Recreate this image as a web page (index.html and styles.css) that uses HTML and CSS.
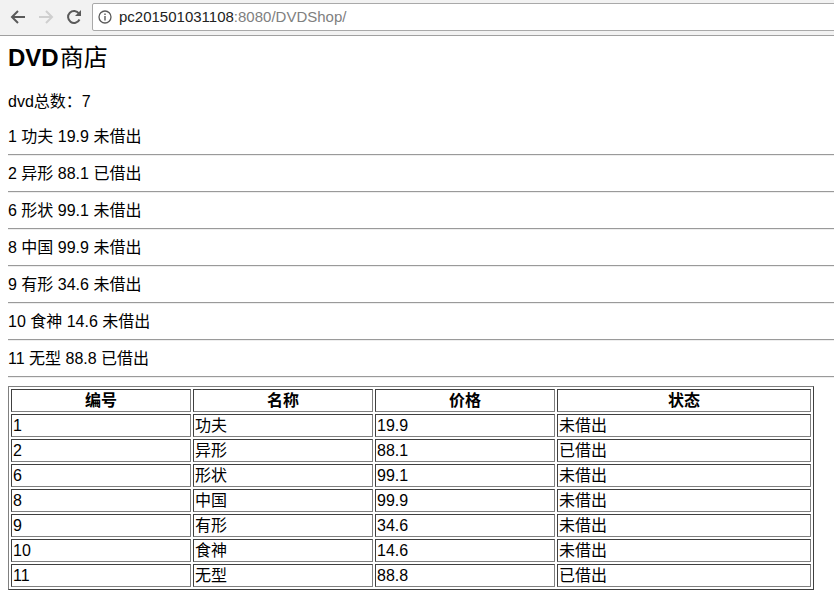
FILE: index.html
```html
<!DOCTYPE html>
<html lang="zh">
<head>
<meta charset="utf-8">
<title>DVD商店</title>
<link rel="stylesheet" href="styles.css">
</head>
<body>
<header class="toolbar">
  <button class="nav" aria-label="back"><svg width="18" height="18" viewBox="0 0 18 18"><path d="M16 9H3.5M9 3 3 9l6 6" fill="none" stroke="#5a5a5a" stroke-width="2"/></svg></button>
  <button class="nav" aria-label="forward"><svg width="18" height="18" viewBox="0 0 18 18"><path d="M2 9h12.5M9 3l6 6-6 6" fill="none" stroke="#cfcfcf" stroke-width="2"/></svg></button>
  <button class="nav" aria-label="reload"><svg width="18" height="18" viewBox="0 0 18 18"><path d="M14.5 11.5A6 6 0 1 1 14 5.5" fill="none" stroke="#5a5a5a" stroke-width="2"/><path d="M16 2v6h-6z" fill="#5a5a5a"/></svg></button>
  <div class="omnibox">
    <svg class="info" width="14" height="14" viewBox="0 0 14 14"><circle cx="7" cy="7" r="6" fill="none" stroke="#5a5a5a" stroke-width="1.3"/><path d="M7 6v4.5M7 3.4v1.6" stroke="#5a5a5a" stroke-width="1.4"/></svg>
    <span class="host">pc201501031108</span><span class="path">:8080/DVDShop/</span>
  </div>
</header>
<main class="page">
  <h1 class="title">DVD<span class="title-cjk">商店</span></h1>
  <p class="total">dvd总数：7</p>
  <div class="item">1 功夫 19.9 未借出</div>
  <div class="item">2 异形 88.1 已借出</div>
  <div class="item">6 形状 99.1 未借出</div>
  <div class="item">8 中国 99.9 未借出</div>
  <div class="item">9 有形 34.6 未借出</div>
  <div class="item">10 食神 14.6 未借出</div>
  <div class="item">11 无型 88.8 已借出</div>
  <table class="grid">
    <colgroup><col class="c1"><col class="c2"><col class="c3"><col class="c4"></colgroup>
    <thead><tr><th>编号</th><th>名称</th><th>价格</th><th>状态</th></tr></thead>
    <tbody>
      <tr><td>1</td><td>功夫</td><td>19.9</td><td>未借出</td></tr>
      <tr><td>2</td><td>异形</td><td>88.1</td><td>已借出</td></tr>
      <tr><td>6</td><td>形状</td><td>99.1</td><td>未借出</td></tr>
      <tr><td>8</td><td>中国</td><td>99.9</td><td>未借出</td></tr>
      <tr><td>9</td><td>有形</td><td>34.6</td><td>未借出</td></tr>
      <tr><td>10</td><td>食神</td><td>14.6</td><td>未借出</td></tr>
      <tr><td>11</td><td>无型</td><td>88.8</td><td>已借出</td></tr>
    </tbody>
  </table>
</main>
</body>
</html>
```

FILE: styles.css
```css
html, body {
  margin: 0;
  background: #fff;
  color: #000;
  font-family: "Liberation Sans", "Noto Sans CJK SC", sans-serif;
  font-size: 16px;
}
body {
  width: 834px;
  height: 599px;
  overflow: hidden;
}
.toolbar {
  display: flex;
  align-items: center;
  height: 36px;
  box-sizing: border-box;
  padding: 0 0 2px 4px;
  background: #f2f2f2;
  border-bottom: 1px solid #a0a0a0;
  overflow: hidden;
}
.nav {
  width: 28px;
  height: 28px;
  flex: none;
  margin: 0;
  padding: 0;
  border: 0;
  background: none;
  display: flex;
  align-items: center;
  justify-content: center;
}
.omnibox {
  flex: none;
  width: 760px;
  height: 28px;
  margin-left: 4px;
  box-sizing: border-box;
  display: flex;
  align-items: center;
  padding-left: 5px;
  background: #fff;
  border: 1px solid #a9a9a9;
  border-radius: 2px;
  font-size: 15px;
}
.info {
  margin-right: 7px;
}
.host { color: #222; }
.path { color: #808080; }
.page {
  padding: 0 0 0 8px;
}
.title {
  margin: 0;
  padding-top: 6px;
  height: 31px;
  line-height: 31px;
  font-size: 24px;
  font-weight: bold;
}
.title-cjk {
  font-weight: normal;
  margin-left: 1px;
}
.total {
  margin: 0 0 6px;
  padding-top: 19px;
  height: 20px;
  line-height: 20px;
}
.item {
  height: 20px;
  padding: 9px 0 7px;
  line-height: 20px;
  border-bottom: 1px solid #9a9a9a;
  box-shadow: 0 1px 0 #eeeeee;
}
.grid {
  margin-top: 9px;
  width: 806px;
  table-layout: fixed;
  border-collapse: separate;
  border-spacing: 2px;
  border: 1px solid;
  border-color: #808080 #404040 #404040 #808080;
}
.c1, .c2, .c3 { width: 180px; }
.grid th, .grid td {
  padding: 1px;
  height: 19px;
  line-height: 19px;
  border: 1px solid;
  border-color: #404040 #808080 #808080 #404040;
  overflow: hidden;
  white-space: nowrap;
}
.grid th {
  font-weight: bold;
  text-align: center;
}
.grid td {
  text-align: left;
}
```
